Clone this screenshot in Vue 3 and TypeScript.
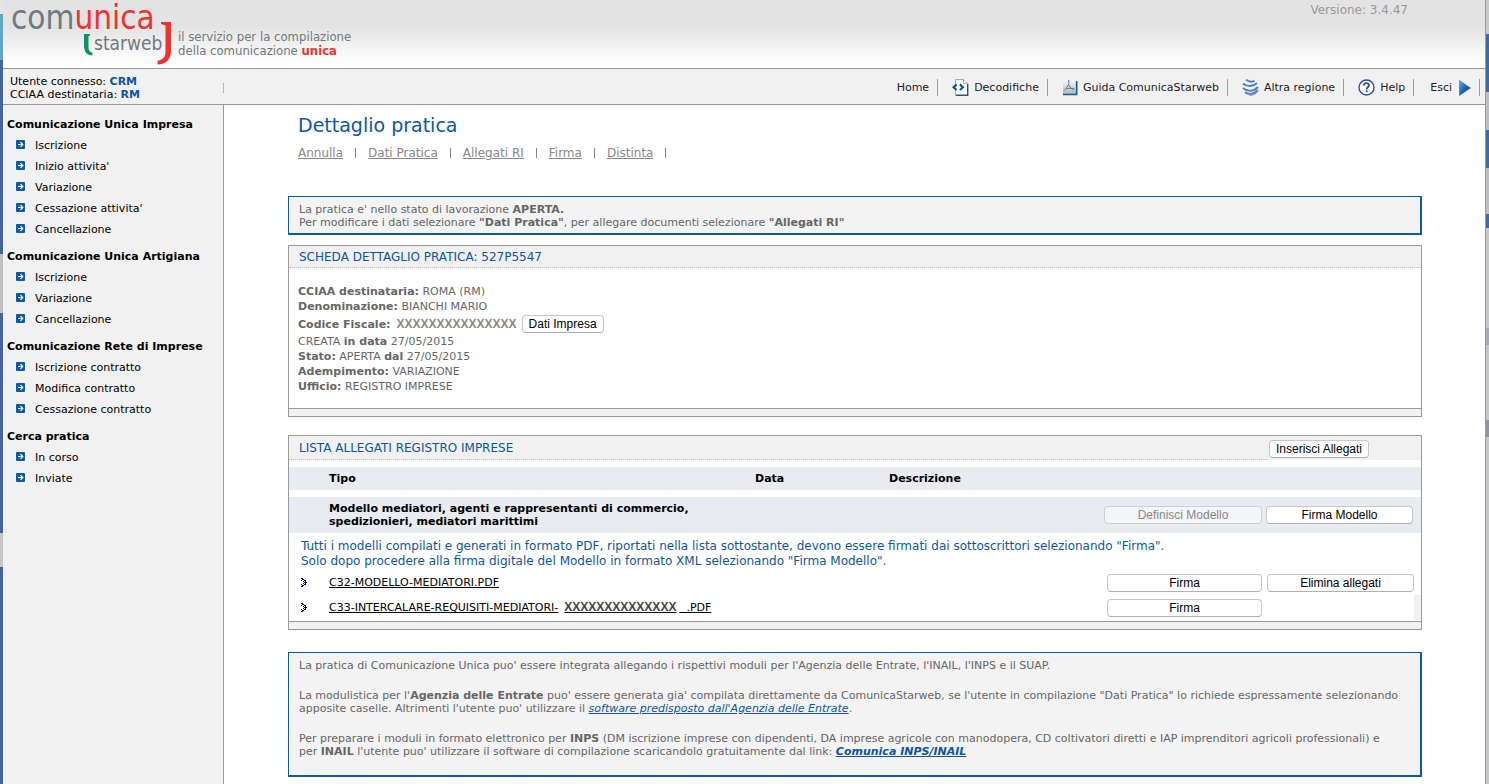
<script setup lang="ts">
interface MenuGroup {
  title: string
  items: string[]
}

const menu: MenuGroup[] = [
  {
    title: 'Comunicazione Unica Impresa',
    items: ['Iscrizione', "Inizio attivita'", 'Variazione', "Cessazione attivita'", 'Cancellazione'],
  },
  { title: 'Comunicazione Unica Artigiana', items: ['Iscrizione', 'Variazione', 'Cancellazione'] },
  {
    title: 'Comunicazione Rete di Imprese',
    items: ['Iscrizione contratto', 'Modifica contratto', 'Cessazione contratto'],
  },
  { title: 'Cerca pratica', items: ['In corso', 'Inviate'] },
]

const actions: string[] = ['Annulla', 'Dati Pratica', 'Allegati RI', 'Firma', 'Distinta']
</script>

<template>
  <div class="desktop">
    <div class="edge edge-left"></div>
    <div class="page">
      <header class="banner">
        <svg class="logo" width="360" height="68" viewBox="0 0 360 68" role="img" aria-label="comunica starweb">
          <text x="8" y="29" class="logo-main">com<tspan class="red">unica</tspan></text>
          <path d="M87 34h-6v11.500c0 6 2.500 9.500 8 10l.8-2.800c-3.200-.6-4.300-2.400-4.300-6.200V36l1.500-.4z" fill="#0f8f6a" />
          <text x="91" y="50" class="logo-sub">starweb</text>
          <path d="M158 22h10v29c0 8-4.500 13.500-13.500 13.500v-3.700c5-.6 8-3.800 8-9.300V25.500l-4.500-1.500z" fill="#ee3430" />
          <text x="175" y="41" class="logo-tag">il servizio per la compilazione</text>
          <text x="175" y="55" class="logo-tag">della comunicazione <tspan class="red strong">unica</tspan></text>
        </svg>
        <p class="version">Versione: 3.4.47</p>
      </header>

      <div class="toolbar">
        <div class="user">
          <p>Utente connesso: <b>CRM</b></p>
          <p>CCIAA destinataria: <b>RM</b></p>
        </div>
        <span class="tick"></span>
        <nav class="tools">
          <a href="#">Home</a>
          <a href="#">
            <svg width="17" height="17" viewBox="0 0 17 17">
              <path d="M3.500.5h8l4 4v12h-12z" fill="#fff" stroke="#aaa" />
              <path d="M11.500.5v4h4" fill="#eee" stroke="#aaa" />
              <path d="M4 16.300h11.700V5" fill="none" stroke="#27508f" stroke-width="1.400" />
              <path d="M4.600 5.400 1.600 8.200l3 2.800M7.900 5.400l3 2.800-3 2.800" fill="none" stroke="#0e55a0" stroke-width="2.200" />
            </svg>
            Decodifiche
          </a>
          <a href="#">
            <svg width="16" height="17" viewBox="0 0 16 17">
              <defs>
                <linearGradient id="pdf" x1="0" y1="0" x2="0" y2="1">
                  <stop offset="0" stop-color="#f2f2f2" /><stop offset="1" stop-color="#a5bac4" />
                </linearGradient>
              </defs>
              <path d="M2 2h12v13H1V7z" fill="url(#pdf)" />
              <path d="M1 15.500h13.700V2" fill="none" stroke="#155a94" stroke-width="1.600" />
              <path d="M6.500 1c1 3 .3 6-4.500 10.500M7 6c.5 2.500 2.500 4 5 4.300M4 10c2-.8 4.500-1 8.500.2" fill="none" stroke="#6b7277" />
            </svg>
            Guida ComunicaStarweb
          </a>
          <a href="#">
            <svg width="17" height="17" viewBox="0 0 17 17">
              <circle cx="9" cy="8.500" r="7.500" fill="#f7f7f7" />
              <path d="M4 .8c3 2.200 6 2.200 8.500 1.200M1 4.500c4 3.500 10 3.500 14-.5M1 9c4 4 11 3.500 15-1M3 13.500c4 2.200 9 1.500 12.500-2" fill="none" stroke="#4a82ce" stroke-width="2" />
              <path d="M7 16.200c4 .6 8.500-1.800 9.500-5.500" fill="none" stroke="#888" />
            </svg>
            Altra regione
          </a>
          <a href="#">
            <svg width="17" height="17" viewBox="0 0 17 17">
              <circle cx="8.500" cy="8.500" r="7.500" fill="#fff" stroke="#2b4ea0" stroke-width="1.400" />
              <path d="M5.900 6.500c.1-3.200 5.300-3 5.100-.1-.1 1.900-2.400 1.900-2.400 4M8.600 11.300v2" fill="none" stroke="#2b4ea0" stroke-width="1.800" />
            </svg>
            Help
          </a>
          <a href="#" class="exit">
            Esci
            <svg width="12" height="16" viewBox="0 0 12 16">
              <defs>
                <linearGradient id="exit-fill" x1="0" y1="0" x2="1" y2="1">
                  <stop offset="0" stop-color="#6fb0e4" /><stop offset=".5" stop-color="#1762ad" /><stop offset="1" stop-color="#0b437f" />
                </linearGradient>
              </defs>
              <path d="M.5.500 11.500 8 .5 15.500z" fill="url(#exit-fill)" stroke="#3d6d9c" stroke-width=".6" />
            </svg>
          </a>
        </nav>
      </div>

      <div class="body">
        <aside class="sidebar">
          <section v-for="group in menu" :key="group.title">
            <h2>{{ group.title }}</h2>
            <ul>
              <li v-for="item in group.items" :key="item">
                <svg width="9" height="9" viewBox="0 0 9 9">
                  <rect width="9" height="9" rx="1" fill="#0e5aa8" />
                  <path d="M2 4.500h4.500M4.500 2.200 6.800 4.500 4.500 6.800" fill="none" stroke="#fff" stroke-width="1.200" />
                </svg>
                <a href="#">{{ item }}</a>
              </li>
            </ul>
          </section>
        </aside>

        <main class="content">
          <h1>Dettaglio pratica</h1>
          <nav class="actions">
            <template v-for="action in actions" :key="action">
              <a href="#">{{ action }}</a><span class="bar"></span>
            </template>
          </nav>

          <div class="notice">
            <p>La pratica e' nello stato di lavorazione <b>APERTA.</b></p>
            <p>Per modificare i dati selezionare <b>"Dati Pratica"</b>, per allegare documenti selezionare <b>"Allegati RI"</b></p>
          </div>

          <section class="panel">
            <div class="panel-head"><h3>SCHEDA DETTAGLIO PRATICA: 527P5547</h3></div>
            <div class="details">
              <p><b>CCIAA destinataria:</b> ROMA (RM)</p>
              <p><b>Denominazione:</b> BIANCHI MARIO</p>
              <p class="fiscal">
                <b>Codice Fiscale:</b><span class="mask">XXXXXXXXXXXXXXX</span>
                <button type="button">Dati Impresa</button>
              </p>
              <p>CREATA <b>in data</b> 27/05/2015</p>
              <p><b>Stato:</b> APERTA <b>dal</b> 27/05/2015</p>
              <p><b>Adempimento:</b> VARIAZIONE</p>
              <p><b>Ufficio:</b> REGISTRO IMPRESE</p>
            </div>
            <div class="panel-foot"></div>
          </section>

          <section class="panel">
            <div class="panel-head with-button">
              <h3>LISTA ALLEGATI REGISTRO IMPRESE</h3>
              <div class="head-tools"><button type="button">Inserisci Allegati</button></div>
            </div>
            <table>
              <colgroup>
                <col class="c-mark" /><col class="c-type" /><col class="c-date" /><col />
                <col class="c-sign" /><col class="c-last" />
              </colgroup>
              <thead>
                <tr class="shade head-row">
                  <th></th><th>Tipo</th><th>Data</th><th>Descrizione</th><th></th><th></th>
                </tr>
              </thead>
              <tbody>
                <tr class="spacer"><td colspan="6"></td></tr>
                <tr class="shade group-row">
                  <td></td>
                  <th colspan="3">Modello mediatori, agenti e rappresentanti di commercio,<br />spedizionieri, mediatori marittimi</th>
                  <td><button type="button" class="wide" disabled>Definisci Modello</button></td>
                  <td><button type="button" class="wide">Firma Modello</button></td>
                </tr>
                <tr>
                  <td colspan="6" class="hint">
                    Tutti i modelli compilati e generati in formato PDF, riportati nella lista sottostante, devono essere firmati dai sottoscrittori selezionando "Firma".<br />
                    Solo dopo procedere alla firma digitale del Modello in formato XML selezionando "Firma Modello".
                  </td>
                </tr>
                <tr class="file">
                  <td class="mark">
                    <svg width="7" height="9" viewBox="0 0 7 9" shape-rendering="crispEdges" fill="#00007c">
                      <path d="M0 0h2v1H0zM1 1h2v1H1zM0 2h1v1H0zM3 2h2v1H3zM2 3h1v1H2zM4 3h1v1H4zM3 4h3v1H3zM2 5h1v1H2zM4 5h1v1H4zM0 6h1v1H0zM3 6h2v1H3zM1 7h2v1H1zM0 8h2v1H0z" />
                    </svg>
                  </td>
                  <td colspan="3"><a href="#">C32-MODELLO-MEDIATORI.PDF</a></td>
                  <td><button type="button" class="wide">Firma</button></td>
                  <td><button type="button" class="wide">Elimina allegati</button></td>
                </tr>
                <tr class="file">
                  <td class="mark">
                    <svg width="7" height="9" viewBox="0 0 7 9" shape-rendering="crispEdges" fill="#00007c">
                      <path d="M0 0h2v1H0zM1 1h2v1H1zM0 2h1v1H0zM3 2h2v1H3zM2 3h1v1H2zM4 3h1v1H4zM3 4h3v1H3zM2 5h1v1H2zM4 5h1v1H4zM0 6h1v1H0zM3 6h2v1H3zM1 7h2v1H1zM0 8h2v1H0z" />
                    </svg>
                  </td>
                  <td colspan="3"><a href="#">C33-INTERCALARE-REQUISITI-MEDIATORI-<span class="mask dark">XXXXXXXXXXXXXX</span>&nbsp;&nbsp;.PDF</a></td>
                  <td><button type="button" class="wide">Firma</button></td>
                  <td class="stub"></td>
                </tr>
              </tbody>
            </table>
            <div class="panel-foot"></div>
          </section>

          <div class="notice info">
            <p>La pratica di Comunicazione Unica puo' essere integrata allegando i rispettivi moduli per l'Agenzia delle Entrate, l'INAIL, l'INPS e il SUAP.</p>
            <p>La modulistica per l'<b>Agenzia delle Entrate</b> puo' essere generata gia' compilata direttamente da ComunicaStarweb, se l'utente in compilazione "Dati Pratica" lo richiede espressamente selezionando apposite caselle. Altrimenti l'utente puo' utilizzare il <a href="#">software predisposto dall'Agenzia delle Entrate</a>.</p>
            <p>Per preparare i moduli in formato elettronico per <b>INPS</b> (DM iscrizione imprese con dipendenti, DA imprese agricole con manodopera, CD coltivatori diretti e IAP imprenditori agricoli professionali) e per <b>INAIL</b> l'utente puo' utilizzare il software di compilazione scaricandolo gratuitamente dal link: <a href="#"><b>Comunica INPS/INAIL</b></a></p>
          </div>
        </main>
      </div>
    </div>
    <div class="edge edge-right"></div>
  </div>
</template>

<style>
body {
  margin: 0;
}
</style>

<style scoped>
.desktop {
  display: grid;
  grid-template-columns: 3px minmax(0, 1fr) 4px;
  min-height: 100vh;
  font: 11px/13px Verdana, 'DejaVu Sans', sans-serif;
  color: #000;
  background: #fff;
}
.desktop * {
  box-sizing: border-box;
}
p, h1, h2, h3, ul {
  margin: 0;
  padding: 0;
}
.edge-left {
  background: linear-gradient(#e0e6ea 0 14px, #62a5c4 14px 60px, #46649a 60px 254px, #bfc1c3 254px 313px, #46649a 313px 533px, #c4c6c8 533px 567px, #46649a 567px);
}
.edge-right {
  border-left: 1px solid #999c9e;
  background: linear-gradient(#c8caca 0 34px, #41699e 34px 92px, #bcbebf 92px 130px, #41699e 130px 168px, #bcbebf 168px 214px, #41699e 214px 228px, #c6c8c8 228px 328px, #a5abba 328px 345px, #c6c8c8 345px 420px, #8c95a1 420px 437px, #c6c8c8 437px);
}
.page {
  display: flex;
  flex-direction: column;
}
.banner {
  display: flex;
  justify-content: space-between;
  height: 69px;
  border-bottom: 1px solid #999;
  background: linear-gradient(#e3e3e3 0 26px, #f3f3f3 48px, #fff 64px);
}
.logo {
  font-family: 'DejaVu Sans Condensed', 'DejaVu Sans', sans-serif;
  fill: #6f7a80;
}
.logo-main {
  font-size: 33px;
}
.logo-sub {
  font-size: 19px;
}
.logo-tag {
  font-size: 13px;
}
.red {
  fill: #ee3430;
}
.strong {
  font-weight: bold;
}
.version {
  padding: 3px 77px 0 0;
  font-size: 12px;
  line-height: 15px;
  color: #999;
}
.toolbar {
  display: flex;
  align-items: center;
  height: 36px;
  padding-top: 2px;
  border-bottom: 1px solid #999;
  background: #f1f1f1;
}
.user {
  width: 220px;
  padding-left: 7px;
}
.user b {
  color: #0e55a5;
}
.tick {
  width: 1px;
  height: 10px;
  background: #b5b9a8;
}
.tools {
  display: flex;
  align-items: center;
  margin-left: auto;
  padding-right: 5px;
}
.tools a {
  display: flex;
  align-items: center;
  gap: 5px;
  height: 17px;
  padding: 0 8px 0 14px;
  border-right: 1px solid #7ba3c8;
  color: #222;
  text-decoration: none;
}
.tools .exit {
  gap: 7px;
  padding-left: 16px;
}
.body {
  display: flex;
  flex: 1;
}
.sidebar {
  flex: none;
  width: 221px;
  padding: 3px 0 0 4px;
  border-right: 1px solid #999;
  background: #f1f1f1;
}
.sidebar section {
  margin-top: 6px;
}
.sidebar h2 {
  font-size: 11px;
  line-height: 21px;
}
.sidebar li {
  display: flex;
  align-items: center;
  gap: 10px;
  height: 21px;
  padding-left: 9px;
}
.sidebar svg {
  margin-bottom: 2px;
}
.sidebar a {
  color: #000;
  text-decoration: none;
}
.content {
  flex: 1;
  min-width: 0;
  padding: 8px 63px 7px 64px;
}
h1 {
  padding-left: 10px;
  font-size: 19px;
  line-height: 24px;
  font-weight: normal;
  color: #0e55a5;
}
.actions {
  display: flex;
  align-items: center;
  gap: 12px;
  padding: 8px 0 0 10px;
  margin-bottom: 35px;
  font-size: 12px;
  line-height: 16px;
}
.actions a {
  color: #888;
}
.bar {
  width: 1px;
  height: 10px;
  background: #85819a;
}
.notice {
  padding: 6px 10px 4px;
  border: solid #0e5aa8;
  border-width: 1px 2px 2px 1px;
  background: #f3f3f3;
  color: #666;
}
.info {
  display: grid;
  gap: 17px;
  margin-top: 22px;
  padding-right: 20px;
  padding-bottom: 17px;
}
.info a {
  color: #0e55a5;
  font-style: italic;
}
.panel {
  margin-top: 10px;
  border: 1px solid #999;
}
.panel + .panel {
  margin-top: 18px;
}
.panel-head {
  display: flex;
  background: #f1f1f1;
}
.panel-head h3 {
  flex: 1;
  padding: 2px 0 0 10px;
  border-bottom: 1px dotted #bbb;
  font-size: 12px;
  line-height: 19px;
  font-weight: normal;
  color: #0e55a5;
}
.with-button h3 {
  line-height: 21px;
}
.head-tools {
  display: flex;
  align-items: center;
  width: 153px;
  padding: 2px 0 0 1px;
}
.details {
  padding: 16px 9px 14px;
  line-height: 15px;
  color: #666;
}
.fiscal {
  display: flex;
  align-items: center;
  height: 20px;
}
.mask {
  margin: 0 5px 0 6px;
  font: bold 12px/15px 'Liberation Sans', Arial, sans-serif;
  color: #8c8280;
}
.mask.dark {
  margin: 0 3px 0 6px;
  color: #444;
}
.panel-foot {
  height: 8px;
  border-top: 1px solid #999;
  background: #f1f1f1;
}
button {
  height: 18px;
  padding: 0 6px;
  border: 1px solid #c8c8c8;
  border-bottom-color: #b0b0b0;
  border-radius: 4px;
  background: #fff;
  font: 12px/14px 'Liberation Sans', Arial, sans-serif;
  color: #000;
}
button:disabled {
  border-color: #cdcfd2;
  background: #f4f5f7;
  color: #888;
}
.wide {
  display: block;
  width: 100%;
}
table {
  width: 100%;
  margin: 7px 0 1px;
  border-collapse: collapse;
  table-layout: fixed;
}
td, th {
  padding: 0;
  text-align: left;
}
.c-mark {
  width: 40px;
}
.c-type {
  width: 426px;
}
.c-date {
  width: 134px;
}
.c-sign {
  width: 162px;
}
.c-last {
  width: 155px;
}
.shade {
  background: #e8ebf0;
}
.head-row {
  height: 23px;
}
.spacer {
  height: 7px;
}
.group-row {
  height: 36px;
}
.group-row th + td {
  padding-right: 4px;
}
.group-row td:last-child {
  padding-right: 8px;
}
.file td:last-child {
  padding: 0 7px 0 1px;
}
.hint {
  padding: 6px 12px 1px;
  font-size: 12px;
  line-height: 15px;
  color: #0e55a5;
}
.file {
  height: 25px;
}
.file td:nth-child(3) {
  padding: 0 4px 0 3px;
}
.mark {
  padding-left: 12px;
}
.mark svg {
  display: block;
}
.file a {
  color: #000;
}
.stub {
  background: linear-gradient(#f1f1f1, #f1f1f1) right / 7px 100% no-repeat;
}
</style>
